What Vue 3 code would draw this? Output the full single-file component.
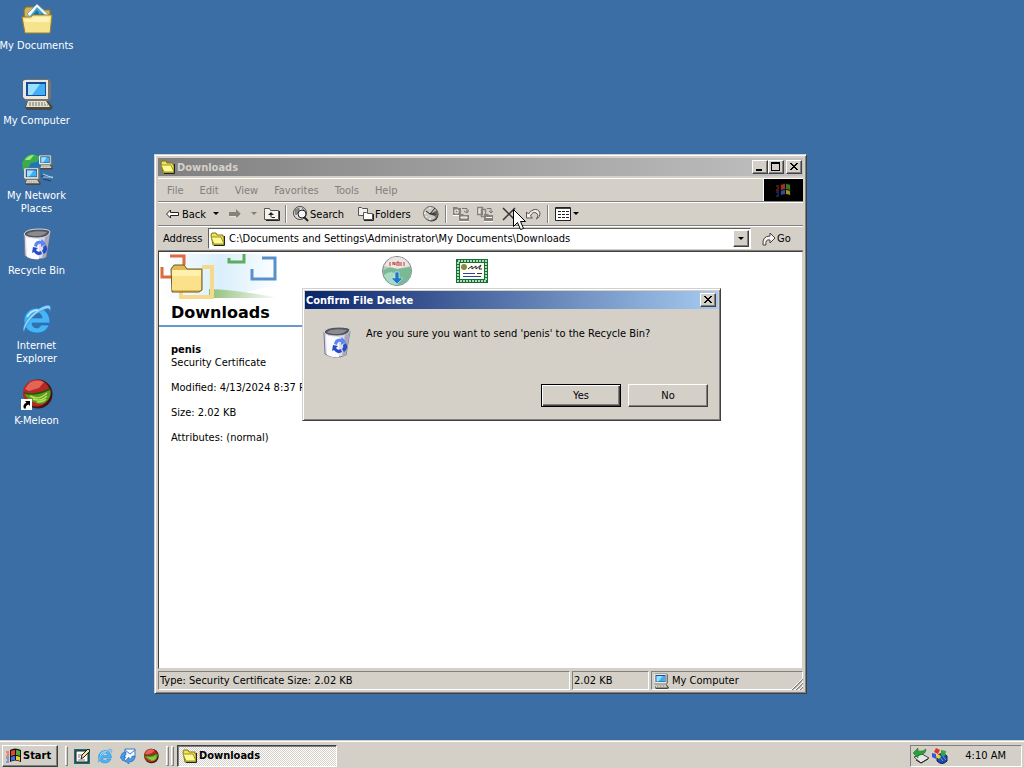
<template>
  <div class="screen">
    <!-- shared icon shapes -->
    <svg class="defs" aria-hidden="true">
      <symbol id="folder" viewBox="0 0 16 16">
        <path d="M1 4l1-2h4l1 2h6v2h1v8H3z" fill="#f2e25a" stroke="#7d7418" />
        <path d="M1 6h10l3 7H4z" fill="#fffb94" stroke="#9c9124" />
        <path d="M14.500 5v9.500H4" fill="none" stroke="#222" />
      </symbol>
      <symbol id="computer" viewBox="0 0 32 32">
        <path d="M2 3l3-2h23l2 3v16l-3 3H5l-3-3z" fill="#77746b" />
        <path d="M2 3l2-1h23v19H4l-2-2z" fill="#ece9dc" />
        <path d="M5 4h20v14H5z" fill="#174b9c" />
        <path d="M7 6h17v11H7z" fill="#3fb0f4" />
        <path d="M7 6h12l-8 11H7z" fill="#9be1fd" />
        <path d="M7 23h20l5 6-2 3H6l-2-3z" fill="#4b4840" />
        <path d="M7 23h18l4 6H5z" fill="#e4e0d2" />
        <path d="M8 25h16M8 27h19" stroke="#77736a" stroke-dasharray="2 1" />
      </symbol>
      <symbol id="bin" viewBox="0 0 32 32">
        <path d="M3 6l1 22q10 6 21 1l4-24z" fill="#dcdce8" stroke="#77778c" />
        <path d="M5 9l1 20q6 3 12 2V11z" fill="#fafaff" />
        <path d="M24 7l5-2-4 24-4 2z" fill="#a9a9bd" />
        <path d="M3 6q2-5 15-5 11 0 11 3-2 6-13 6Q5 10 3 6z" fill="#55565d" stroke="#d5d5df" />
        <path d="M6 6q5-4 20-2-3 4-10 4-8 0-10-2z" fill="#8b8b90" />
        <path d="M13 18q1-6 7-5l1-2 4 5-5 3v-3q-3-1-4 3z" fill="#5b86f0" />
        <path d="M12 19l5 1-2 2q2 3 5 1l1 3q-5 3-8-2l-2 1zM25 17q3 6-2 9l-2-3q2-2 1-4z" fill="#244bc8" />
      </symbol>
      <symbol id="ie" viewBox="0 0 32 32">
        <path d="M16 5C8 5 3 11 3 18s5 12 13 12c6 0 10-3 12-8h-8c-1 2-2 3-4 3-3 0-5-2-5-5h18C29 11 24 5 16 5zm-5 10c0-3 2-5 5-5s5 2 5 5z" fill="#47b5f5" stroke="#1b72c0" stroke-width=".7" />
        <path d="M3 29C-1 24 10 9 21 4c8-4 10-1 8 5 0-4-2-4-7-2C13 11 5 20 3 29z" fill="#8bd4fb" stroke="#2b7cc6" stroke-width=".6" />
        <path d="M6 14q4-7 11-7" fill="none" stroke="#c4edff" stroke-width="1.5" />
      </symbol>
      <symbol id="meleon" viewBox="0 0 32 32">
        <circle cx="17" cy="16" r="14.500" fill="#401410" />
        <circle cx="15.500" cy="15" r="13.500" fill="#b52925" />
        <path d="M4 11Q10-1 23 4l-5 6-10 3z" fill="#e46558" />
        <path d="M3 15q12 2 26-4 2 6-2 11-6 6-12 3Q6 22 3 15z" fill="#5c9c22" />
        <path d="M9 18q9 5 17-3M12 21q8 3 14-3M16 24q6 0 9-3" fill="none" stroke="#b7df55" stroke-width="1.500" />
        <path d="M3 15q12 3 26-4" fill="none" stroke="#27530f" stroke-width="1.500" />
      </symbol>
      <symbol id="flag" viewBox="0 0 16 16">
        <path d="M4 2q5-3 11 0v12q-6-3-11 0z" fill="#111" />
        <path d="M5 3q2-1 4-1v5q-2 0-4 1z" fill="#e8442c" />
        <path d="M10 2q2 0 4 1v5q-2-1-4-1z" fill="#49ad38" />
        <path d="M5 9q2-1 4-1v4q-2 0-4 1z" fill="#3c6ee0" />
        <path d="M10 8q2 0 4 1v4q-2-1-4-1z" fill="#f0c830" />
        <path d="M0 4h3M1 6h2M0 8h3" stroke="#e8442c" />
        <path d="M0 10h3M1 12h2M0 14h3" stroke="#3c5ed0" />
      </symbol>
      <symbol id="close" viewBox="0 0 10 10">
        <path d="M1 1h2v1h1v1h2V2h1V1h2v1H8v1H7v1H6v1h1v1h1v1h1v1H7V7H6V6H4v1H3v1H1V7h1V6h1V5h1V4H3V3H2V2H1z" />
      </symbol>
      <symbol id="arrow" viewBox="0 0 6 6">
        <path d="M0 1h6L3 4z" />
      </symbol>
    </svg>

    <main class="desktop">
      <nav class="shortcuts">
        <a v-for="item in shortcuts" :key="item.label" href="#" class="shortcut">
          <svg v-if="item.icon === 'documents'" viewBox="0 0 32 32">
            <path d="M3 7l2-3h8l3 3h13v22H4z" fill="#d6b64c" stroke="#8f7420" />
            <path d="M16 1l13 12-9 10L6 11z" fill="#f6fbff" stroke="#8aa0b4" />
            <path d="M16 4l9 9H9z" fill="#3ea3db" />
            <path d="M11 13l5-6 3 5 2-2 3 4z" fill="#276f8c" />
            <path d="M1 14h9l2-2h19l-2 18H4z" fill="#f8e38d" stroke="#9b8130" />
            <path d="M3 16h8l2-2h16l-1 5H4z" fill="#fff4b8" />
          </svg>
          <svg v-else-if="item.icon === 'network'" viewBox="0 0 32 32">
            <circle cx="12" cy="12" r="11.5" fill="#1b74be" />
            <path d="M1 10Q4 1 13 1l6 3-3 5-6 1-3 6-5 2z" fill="#3cab4b" />
            <path d="M4 7q3-5 9-5l-4 5z" fill="#a4e57a" />
            <path d="M20 23l11 1M22 26l8 2" stroke="#1a3a66" />
            <path d="M22 21l10 4M22 24h10" stroke="#b3d3ee" />
            <use href="#computer" x="17" y="1" width="15" height="16" />
            <use href="#computer" x="2" y="14" width="18" height="18" />
          </svg>
          <svg v-else><use :href="'#' + item.icon" /></svg>
          <svg v-if="item.linked" class="link-mark" viewBox="0 0 11 11">
            <path d="M0 0h11v11H0z" fill="#fff" />
            <path d="M4 2h5v5L7.500 5.500Q4 7 5 9.500H3Q1 6 5.500 3.500z" fill="#000" />
          </svg>
          <span>{{ item.label }}</span>
        </a>
      </nav>

      <section class="window explorer">
        <header class="title-bar inactive">
          <svg class="i16"><use href="#folder" /></svg>
          <h2>Downloads</h2>
          <div class="controls">
            <button aria-label="Minimize"><svg viewBox="0 0 10 10"><path d="M1 7h6v2H1z" /></svg></button>
            <button aria-label="Maximize">
              <svg viewBox="0 0 10 10"><path d="M0 0h9v9H0zM1 2v6h7V2z" fill-rule="evenodd" /></svg>
            </button>
            <button class="close" aria-label="Close"><svg><use href="#close" /></svg></button>
          </div>
        </header>

        <div class="menu-row">
          <nav class="menu">
            <button v-for="name in menus" :key="name">{{ name }}</button>
          </nav>
          <div class="brand"><svg class="i16"><use href="#flag" /></svg></div>
        </div>

        <div class="toolbar">
          <button class="back">
            <svg class="i16" viewBox="0 0 16 16">
              <path d="M1.500 8l4-4v2.500h8v3h-8V12z" fill="#fff" stroke="#222" />
            </svg>Back
          </button>
          <button class="drop" aria-label="Back history"><svg><use href="#arrow" /></svg></button>
          <button class="tool" aria-label="Forward">
            <svg class="i16" viewBox="0 0 16 16">
              <path d="M14 8l-5-5v3H2v4h7v3z" fill="#858279" />
              <path d="M3 10.500h6V13l5-5" fill="none" stroke="#fff" stroke-width=".5" />
            </svg>
          </button>
          <button class="drop off" aria-label="Forward history"><svg><use href="#arrow" /></svg></button>
          <button class="tool up" aria-label="Up">
            <svg class="i16" viewBox="0 0 16 16">
              <path d="M.5 4.500v-2h5l1 2h8v9H.5z" fill="#f5f3ec" stroke="#555" />
              <path d="M15.500 5v9.500H2" fill="none" stroke="#222" />
              <path d="M7 6l3 3H7.500v3H11v-1H6.500V9H4z" fill="#222" />
            </svg>
          </button>
          <i class="sep"></i>
          <button class="labelled">
            <svg class="i16" viewBox="0 0 16 16">
              <circle cx="7" cy="7" r="6.500" fill="#ddd" stroke="#444" />
              <path d="M2 4l4-2v3l-3 4zM9 2l3 3" stroke="#777" fill="#888" />
              <circle cx="9" cy="8" r="4" fill="#f4f4f4" stroke="#222" />
              <path d="M11 11l4 4" stroke="#222" stroke-width="2" />
            </svg>Search
          </button>
          <button class="labelled">
            <svg class="i16" viewBox="0 0 16 16">
              <path d="M.5 9.500v-8h3l1 1h5v7z" fill="#f2f0ea" stroke="#555" />
              <path d="M5.500 13.500v-7h3l1 1h5v6z" fill="#fff" stroke="#555" />
              <path d="M15.500 8v6.500H6" fill="none" stroke="#222" />
            </svg>Folders
          </button>
          <button class="tool" aria-label="History">
            <svg class="i16" viewBox="0 0 16 16">
              <circle cx="8.500" cy="8.500" r="7" fill="#333" />
              <circle cx="7.500" cy="7.500" r="7" fill="#ccc9c2" stroke="#666" />
              <path d="M7 8l7-4q1 4-1 7z" fill="#666" />
              <path d="M3 5l4 3 5-6M7 8h6" fill="none" stroke="#222" />
              <path d="M7 1v2M1 7h2M7 12v2M3 11l1-1" stroke="#fff" />
            </svg>
          </button>
          <i class="sep"></i>
          <button class="tool" aria-label="Move To">
            <svg class="i16" viewBox="0 0 16 16">
              <path d="M0 1h4l1 1h3v7H0zM6 8h4l1 1h5v6H6z" fill="#858279" />
              <path d="M2 4h3v3H2zM8 11h6v1H8z" fill="none" stroke="#fff" />
              <path d="M9 2.500h5V6M11 5l3 2 2-3" fill="none" stroke="#777" />
              <path d="M6 15.500h10M0 9.500h6" stroke="#fff" />
            </svg>
          </button>
          <button class="tool" aria-label="Copy To">
            <svg class="i16" viewBox="0 0 16 16">
              <path d="M.5 1.500h5v7h-5zM4.500 3.500h4v7h-4z" fill="#e9e6df" stroke="#85827b" stroke-width="1.500" />
              <path d="M7 8h4l1 1h4v6H7z" fill="#858279" />
              <path d="M10 2.500h4V6M12 5l2 2 2-2" fill="none" stroke="#777" />
              <path d="M9 11.500h6M7 15.500h9" stroke="#fff" />
            </svg>
          </button>
          <button class="tool" aria-label="Delete">
            <svg class="i16" viewBox="0 0 16 16">
              <path d="M2 2l12 12M14 2L2 14" stroke="#333" stroke-width="1.500" />
            </svg>
          </button>
          <button class="tool" aria-label="Undo">
            <svg class="i16" viewBox="0 0 16 16">
              <path d="M1.500 6v6h6l-2-2q2-5 6-3 3 2 0 6 4-2 3.500-6Q13 2 8 4 5 5 3.500 8z" fill="#f4f2ec" stroke="#555" />
            </svg>
          </button>
          <i class="sep"></i>
          <button class="labelled views" aria-label="Views">
            <svg class="i16" viewBox="0 0 16 16">
              <path d="M.5 1.500h15v13H.5z" fill="#fff" stroke="#222" />
              <path d="M1 2.500h14" stroke="#444" />
              <path d="M3 5.500h11M3 8.500h11M3 11.500h11" stroke="#222" stroke-dasharray="3 1" />
            </svg>
            <svg class="tiny"><use href="#arrow" /></svg>
          </button>
        </div>

        <div class="address-row">
          <label for="address">Address</label>
          <div class="combo">
            <svg class="i16"><use href="#folder" /></svg>
            <input id="address" v-model="path" type="text" spellcheck="false" />
            <button aria-label="Show addresses"><svg class="tiny"><use href="#arrow" /></svg></button>
          </div>
          <button class="go">
            <svg class="i16" viewBox="0 0 16 16">
              <path d="M2 14Q1 5 9 5V2l5 5-5 5V9q-5-1-4 5z" fill="#f6f4ee" stroke="#444" />
            </svg>Go
          </button>
        </div>

        <div class="view">
          <aside class="panel">
            <svg class="banner" viewBox="0 0 150 48">
              <defs>
                <linearGradient id="sky" x1="0" x2="1">
                  <stop offset="0" stop-color="#fff" />
                  <stop offset=".5" stop-color="#d9effb" />
                  <stop offset="1" stop-color="#fff" />
                </linearGradient>
                <linearGradient id="grass" x1="0" x2="1">
                  <stop offset="0" stop-color="#8fbf7a" />
                  <stop offset="1" stop-color="#fff" />
                </linearGradient>
              </defs>
              <path d="M2 2h120v30L60 46H2z" fill="url(#sky)" />
              <path d="M50 37q30 1 70 9H50z" fill="url(#grass)" />
              <path d="M11 4h14v9M3 15v10h11" fill="none" stroke="#dd6b3c" stroke-width="3" />
              <path d="M70 6v4h15V2" fill="none" stroke="#5cae5c" stroke-width="3" />
              <path d="M93 17v10h23V6h-13" fill="none" stroke="#5a8fca" stroke-width="3" />
              <path d="M43 15h10v30H22v-6" fill="none" stroke="#f6d98a" stroke-width="4" />
              <path d="M12 17l3-4h10l3 4h15v21l-3 2H13z" fill="#e2ba4f" stroke="#6a5a25" />
              <path d="M13 18h29v20H13z" fill="#fbe18a" />
              <path d="M13 18h29v6H13z" fill="#fff0ae" />
            </svg>
            <h1>Downloads</h1>
            <div class="details">
              <p><b>penis</b><br />Security Certificate</p>
              <p>Modified: 4/13/2024 8:37 PM</p>
              <p>Size: 2.02 KB</p>
              <p>Attributes: (normal)</p>
            </div>
          </aside>
          <div class="files">
            <a href="#" aria-label="Installer">
              <svg viewBox="0 0 32 32">
                <circle cx="16" cy="16" r="14.500" fill="#b9c9c0" stroke="#7d8790" />
                <path d="M3 11Q8 1 16 2q9 0 13 9l-13 3z" fill="#efe4e0" />
                <path d="M2 16q6-6 14-2l14-2q2 11-6 16-12 5-19-3z" fill="#79b996" />
                <path d="M3 20q8-6 12 0l2 10Q6 30 3 20z" fill="#a9dbc0" />
                <path d="M9 7v4M12 10V7l2 3V7M16 11V7h2v4M20 11V7M23 7v4" stroke="#b4433e" fill="none" />
                <path d="M14 17h4v6h4l-6 6-6-6h4z" fill="#1d76c8" stroke="#c5e6f5" stroke-width=".7" />
              </svg>
            </a>
            <a href="#" aria-label="Certificate">
              <svg viewBox="0 0 32 32">
                <path d="M0 4h32v24H0z" fill="#1c6c38" />
                <path d="M2 6h28v20H2z" fill="none" stroke="#a9e0b0" stroke-width="2" stroke-dasharray="2 1" />
                <path d="M4 8h24v16H4z" fill="#fffef4" />
                <circle cx="8" cy="12" r="3" fill="#8a8a45" />
                <path d="M12 14l4-3v3l4-3v3l5-4-2 4h3" fill="none" stroke="#222" />
                <path d="M7 18.500h12M7 21.500h18" stroke="#2944a8" />
                <path d="M21 18.500h5" stroke="#333" />
              </svg>
            </a>
          </div>
        </div>

        <footer class="status">
          <span class="info">Type: Security Certificate Size: 2.02 KB</span>
          <span class="size">2.02 KB</span>
          <span class="zone"><svg class="i16"><use href="#computer" /></svg>My Computer</span>
          <svg class="grip" viewBox="0 0 12 12">
            <path d="M1 12L12 1M5 12l7-7M9 12l3-3" stroke="#808080" stroke-width="1.500" />
            <path d="M0 12L12 0M4 12l8-8M8 12l4-4" stroke="#fff" />
          </svg>
        </footer>
      </section>

      <section class="window dialog" role="dialog" aria-labelledby="dialog-title">
        <header class="title-bar">
          <h2 id="dialog-title">Confirm File Delete</h2>
          <div class="controls">
            <button class="close" aria-label="Close"><svg><use href="#close" /></svg></button>
          </div>
        </header>
        <div class="message">
          <svg><use href="#bin" /></svg>
          <p>Are you sure you want to send 'penis' to the Recycle Bin?</p>
        </div>
        <div class="actions">
          <button class="default">Yes</button>
          <button>No</button>
        </div>
      </section>

      <svg class="pointer" viewBox="0 0 13 22">
        <path d="M.5.5v17l4-4 3 7 3-1-3-7h5z" fill="#fff" stroke="#000" />
      </svg>
    </main>

    <footer class="taskbar">
      <button class="start"><svg class="i16"><use href="#flag" /></svg>Start</button>
      <i class="handle"></i>
      <nav class="quick">
        <button aria-label="Show Desktop">
          <svg class="i16" viewBox="0 0 16 16">
            <path d="M0 1h16v15H0z" fill="#26696c" />
            <path d="M2 3h12v11H2z" fill="#fff" stroke="#222" />
            <path d="M4 7h4M4 9h2M4 12h7" stroke="#777" />
            <path d="M7 11l1-4 6-6 2 2-6 6z" fill="#f3e4a0" stroke="#222" />
          </svg>
        </button>
        <button aria-label="Internet Explorer"><svg class="i16"><use href="#ie" /></svg></button>
        <button aria-label="Outlook Express">
          <svg class="i16" viewBox="0 0 16 16">
            <path d="M5 1h10v8l-3 4H4z" fill="#f5faff" stroke="#3d78c2" />
            <path d="M5 2l5 4 5-4" fill="none" stroke="#3d78c2" />
            <path d="M1 9q0-5 5-5v3q-2 0-2 2h2l-3 4-3-4zM15 8q0 6-6 6v2l-4-3 4-4v2q3 0 3-3z" fill="#459be4" stroke="#1e59a8" stroke-width=".5" />
          </svg>
        </button>
        <button aria-label="K-Meleon"><svg class="i16"><use href="#meleon" /></svg></button>
      </nav>
      <i class="handle"></i>
      <i class="handle tight"></i>
      <button class="task"><svg class="i16"><use href="#folder" /></svg>Downloads</button>
      <div class="tray">
        <svg class="i16" viewBox="0 0 16 16">
          <path d="M1 9l8-3 7 4-8 5z" fill="#e8e8e8" stroke="#444" />
          <path d="M3 12l5 3 7-4" fill="none" stroke="#222" />
          <path d="M0 5l5-5v3q5 1 8-2 0 6-8 6v3z" fill="#28a23a" stroke="#14651f" stroke-width=".5" />
        </svg>
        <svg class="i16" viewBox="0 0 16 16">
          <path d="M5 8q5-5 10 0v5q-5 5-10 0z" fill="#2148a8" stroke="#0b1e58" />
          <path d="M7 8l4 5M10 7l4 5" stroke="#43b4e0" />
          <path d="M4 0l4 2-2 4-4-2z" fill="#e03424" />
          <path d="M9 2l5 1-1 5-4-1z" fill="#34a838" />
          <path d="M0 5l4 1v5l-4-2z" fill="#3158d8" />
          <path d="M5 6l4 2-2 3-3-2z" fill="#f4cf30" />
        </svg>
        <time>4:10 AM</time>
      </div>
    </footer>
  </div>
</template>

<script setup>
import { ref } from 'vue';

const path = ref('C:\\Documents and Settings\\Administrator\\My Documents\\Downloads');

const menus = ['File', 'Edit', 'View', 'Favorites', 'Tools', 'Help'];

// labels carry their own line breaks
const shortcuts = [
  { label: 'My Documents', icon: 'documents' },
  { label: 'My Computer', icon: 'computer' },
  { label: 'My Network\nPlaces', icon: 'network' },
  { label: 'Recycle Bin', icon: 'bin' },
  { label: 'Internet\nExplorer', icon: 'ie' },
  { label: 'K-Meleon', icon: 'meleon', linked: true }
];
</script>

<style>
body {
  margin: 0;
  background: #3a6ea5;
}
</style>

<style scoped>
.screen {
  display: flex;
  flex-direction: column;
  min-height: 100vh;
  overflow: hidden;
  color: #000;
  font: 11px/13px Tahoma, "DejaVu Sans Condensed", "DejaVu Sans", sans-serif;
}

.screen * {
  box-sizing: border-box;
}

.defs {
  position: absolute;
  width: 0;
  height: 0;
}

svg {
  display: block;
  flex: none;
}

.i16 {
  width: 16px;
  height: 16px;
}

.tiny {
  width: 6px;
  height: 6px;
}

h1,
h2,
p {
  margin: 0;
}

button {
  display: flex;
  align-items: center;
  margin: 0;
  padding: 0;
  border: 0;
  background: none;
  color: inherit;
  font: inherit;
}

.desktop {
  position: relative;
  flex: 1;
  background: #3a6ea5;
}

/* desktop shortcuts */
.shortcuts {
  display: flex;
  flex-direction: column;
  width: 73px;
}

.shortcut {
  position: relative;
  display: flex;
  flex-direction: column;
  align-items: center;
  gap: 4px;
  height: 75px;
  padding-top: 3px;
  color: #fff;
  text-align: center;
  text-decoration: none;
  white-space: pre;
}

.shortcut svg {
  width: 32px;
  height: 32px;
}

.shortcut .link-mark {
  position: absolute;
  top: 24px;
  left: 21px;
  width: 11px;
  height: 11px;
}

/* windows */
.window {
  position: absolute;
  display: flex;
  flex-direction: column;
  padding: 2px;
  border: 1px solid;
  border-color: #d4d0c8 #404040 #404040 #d4d0c8;
  background: #d4d0c8;
  box-shadow: inset 1px 1px #fff, inset -1px -1px #808080;
}

.explorer {
  top: 154px;
  left: 154px;
  width: 653px;
  height: 540px;
  padding: 3px;
}

.dialog {
  top: 288px;
  left: 302px;
  width: 419px;
  height: 133px;
}

.title-bar {
  display: flex;
  align-items: center;
  height: 18px;
  padding: 0 2px 0 1px;
  background: linear-gradient(to right, #0a246a, #a6caf0);
  color: #fff;
}

.title-bar.inactive {
  gap: 1px;
  padding: 0 1px 0 2px;
  background: linear-gradient(to right, #808080, #c0c0c0);
  color: #d4d0c8;
}

.title-bar h2 {
  flex: 1;
  font-size: 11px;
  line-height: 13px;
}

.controls {
  display: flex;
}

.controls button {
  justify-content: center;
  width: 16px;
  height: 14px;
  border: 1px solid;
  border-color: #fff #404040 #404040 #fff;
  background: #d4d0c8;
  box-shadow: inset -1px -1px #808080;
}

.controls .close {
  margin-left: 2px;
}

.controls svg {
  width: 10px;
  height: 10px;
}

.menu-row,
.toolbar,
.address-row {
  display: flex;
  align-items: center;
  height: 24px;
  border-top: 1px solid #fff;
  border-bottom: 1px solid #808080;
}

.menu-row {
  margin-top: 2px;
}

.menu {
  display: flex;
  flex: 1;
  padding-left: 1px;
  color: #808080;
}

.menu button {
  padding: 0 8px;
}

.brand {
  display: flex;
  align-items: center;
  justify-content: center;
  width: 40px;
  height: 22px;
  border-left: 1px solid #fff;
  background: #000;
}

.brand svg {
  opacity: 0.7;
}

.toolbar {
  padding-left: 5px;
}

.toolbar .back {
  width: 46px;
  height: 20px;
  padding-left: 2px;
  gap: 1px;
}

.toolbar .drop {
  justify-content: center;
  width: 14px;
  height: 20px;
}

.drop svg {
  width: 6px;
  height: 6px;
}

.drop.off svg {
  fill: #808080;
}

.toolbar .tool {
  justify-content: center;
  width: 24px;
  height: 20px;
}

.toolbar .up {
  width: 22px;
}

.toolbar .labelled {
  gap: 1px;
  width: 65px;
  height: 20px;
  padding-left: 4px;
}

.toolbar .views {
  gap: 2px;
  width: 32px;
}

.sep {
  width: 2px;
  height: 18px;
  margin: 0 2px;
  border-left: 1px solid #808080;
  border-right: 1px solid #fff;
}

.address-row {
  height: 25px;
  padding-left: 5px;
}

.address-row label {
  width: 45px;
}

.combo {
  display: flex;
  flex: 1;
  align-items: center;
  height: 21px;
  padding: 1px;
  border: 1px solid;
  border-color: #606060 #fff #fff #606060;
  background: #fff;
}

.combo input {
  flex: 1;
  min-width: 0;
  margin: 0;
  padding: 0 3px;
  border: 0;
  outline: 0;
  background: none;
  color: inherit;
  font: inherit;
}

.combo button {
  justify-content: center;
  width: 16px;
  height: 17px;
  border: 1px solid;
  border-color: #fff #404040 #404040 #fff;
  background: #d4d0c8;
  box-shadow: inset -1px -1px #808080;
}

.go {
  width: 52px;
  padding-left: 10px;
}

/* folder view */
.view {
  display: flex;
  flex: 1;
  min-height: 0;
  border: 1px solid;
  border-color: #404040 #d4d0c8 #d4d0c8 #404040;
  background: #fff;
}

.panel {
  width: 200px;
}

.banner {
  width: 150px;
  height: 48px;
}

.panel h1 {
  padding: 3px 0 2px 12px;
  border-bottom: 2px solid #6699cc;
  font: bold 16px/20px Verdana, "DejaVu Sans", sans-serif;
}

.details {
  display: flex;
  flex-direction: column;
  gap: 12px;
  padding: 16px 0 0 12px;
  white-space: nowrap;
}

.files {
  display: flex;
  flex: 1;
  align-items: flex-start;
  padding-top: 3px;
}

.files a {
  display: flex;
  justify-content: center;
  width: 75px;
}

.files svg {
  width: 32px;
  height: 32px;
}

.status {
  position: relative;
  display: flex;
  gap: 2px;
  height: 21px;
  padding-top: 2px;
}

.status span {
  display: flex;
  align-items: center;
  gap: 3px;
  padding: 0 1px;
  border: 1px solid;
  border-color: #808080 #fff #fff #808080;
}

.status .info {
  flex: 1;
}

.status .size {
  width: 77px;
}

.status .zone {
  width: 152px;
}

.grip {
  position: absolute;
  right: 0;
  bottom: 0;
  width: 12px;
  height: 12px;
}

/* delete confirmation */
.message {
  display: flex;
  flex: 1;
  gap: 13px;
  padding: 17px 16px 0;
}

.message svg {
  width: 32px;
  height: 32px;
}

.message p {
  padding-top: 1px;
}

.actions {
  display: flex;
  justify-content: flex-end;
  gap: 7px;
  padding: 0 10px 11px;
}

.actions button {
  justify-content: center;
  width: 80px;
  height: 23px;
  border: 1px solid;
  border-color: #fff #404040 #404040 #fff;
  box-shadow: inset -1px -1px #808080;
}

.actions .default {
  border-color: #000;
  box-shadow: inset 1px 1px #fff, inset -1px -1px #404040, inset -2px -2px #808080;
}

.pointer {
  position: absolute;
  top: 209px;
  left: 513px;
  width: 13px;
  height: 22px;
}

/* taskbar */
.taskbar {
  display: flex;
  align-items: center;
  height: 28px;
  padding: 2px 2px 0;
  border-top: 1px solid #d4d0c8;
  background: #d4d0c8;
  box-shadow: inset 0 1px #fff;
}

.start {
  gap: 1px;
  width: 56px;
  height: 22px;
  padding-left: 3px;
  border: 1px solid;
  border-color: #fff #404040 #404040 #fff;
  box-shadow: inset -1px -1px #808080;
  font-weight: bold;
}

.handle {
  width: 3px;
  height: 20px;
  margin-left: 7px;
  border: 1px solid;
  border-color: #fff #808080 #808080 #fff;
}

.handle.tight {
  margin-left: 2px;
}

.quick {
  display: flex;
  gap: 7px;
  padding-left: 6px;
}

.task {
  gap: 1px;
  width: 160px;
  height: 22px;
  margin-left: 3px;
  padding-left: 4px;
  border: 1px solid;
  border-color: #404040 #fff #fff #404040;
  background: repeating-conic-gradient(#fff 0 25%, #d4d0c8 0 50%) 0 0 / 2px 2px;
  box-shadow: inset 1px 1px #808080;
  font-weight: bold;
}

.tray {
  display: flex;
  align-items: center;
  gap: 3px;
  width: 112px;
  height: 22px;
  margin-left: auto;
  padding: 0 15px 0 2px;
  border: 1px solid;
  border-color: #808080 #fff #fff #808080;
}

.tray time {
  margin-left: auto;
}
</style>
